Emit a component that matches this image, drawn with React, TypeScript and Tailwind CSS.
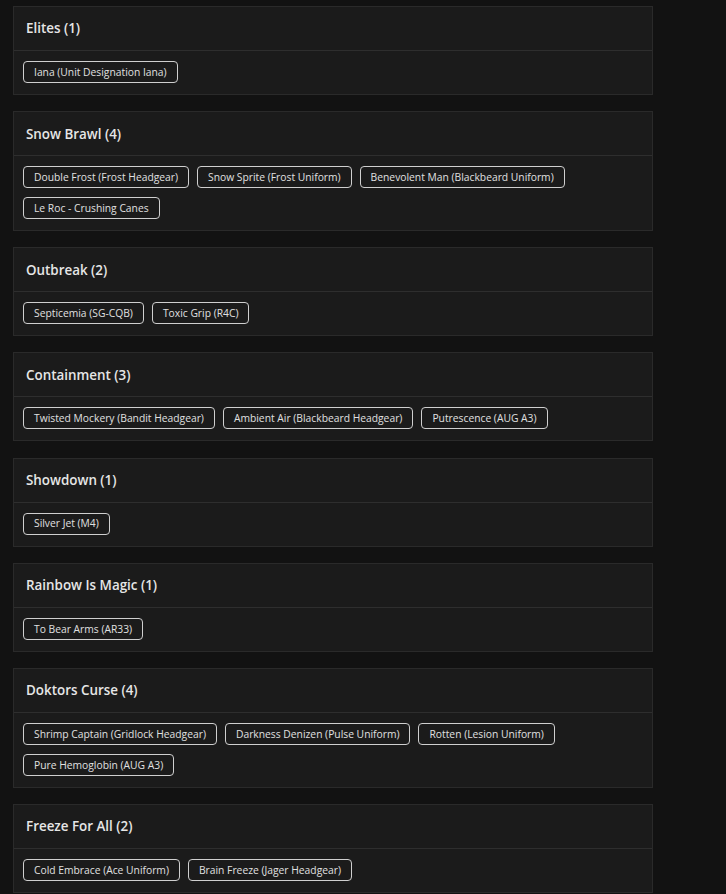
import React from "react";

const groups: { title: string; items: string[] }[] = [
  { title: "Elites (1)", items: ["Iana (Unit Designation Iana)"] },
  {
    title: "Snow Brawl (4)",
    items: [
      "Double Frost (Frost Headgear)",
      "Snow Sprite (Frost Uniform)",
      "Benevolent Man (Blackbeard Uniform)",
      "Le Roc - Crushing Canes",
    ],
  },
  { title: "Outbreak (2)", items: ["Septicemia (SG-CQB)", "Toxic Grip (R4C)"] },
  {
    title: "Containment (3)",
    items: [
      "Twisted Mockery (Bandit Headgear)",
      "Ambient Air (Blackbeard Headgear)",
      "Putrescence (AUG A3)",
    ],
  },
  { title: "Showdown (1)", items: ["Silver Jet (M4)"] },
  { title: "Rainbow Is Magic (1)", items: ["To Bear Arms (AR33)"] },
  {
    title: "Doktors Curse (4)",
    items: [
      "Shrimp Captain (Gridlock Headgear)",
      "Darkness Denizen (Pulse Uniform)",
      "Rotten (Lesion Uniform)",
      "Pure Hemoglobin (AUG A3)",
    ],
  },
  {
    title: "Freeze For All (2)",
    items: ["Cold Embrace (Ace Uniform)", "Brain Freeze (Jager Headgear)"],
  },
];

export default function App() {
  return (
    <div
      className="min-h-[894px] w-full bg-[#121212] pt-[6px] pl-[13px]"
      style={{ fontFamily: '"Open Sans", "Noto Sans", sans-serif' }}
    >
      <div className="flex w-[640px] flex-col gap-[16.15px]">
        {groups.map((g) => (
          <div key={g.title} className="border border-[#2a2a2a] bg-[#1b1b1b]">
            <div className="flex h-[44px] items-center border-b border-[#2e2e2e] px-[12px] text-[13.4px] font-semibold text-[#e6e6e6]">
              {g.title}
            </div>
            <div className="flex flex-wrap gap-x-[8px] gap-y-[9px] px-[9px] pt-[10px] pb-[11px]">
              {g.items.map((it) => (
                <div
                  key={it}
                  className="flex h-[22px] items-center rounded-[4px] border border-[#cfcfcf] px-[10px] text-[10.3px] leading-none text-[#e0e0e0]"
                >
                  {it}
                </div>
              ))}
            </div>
          </div>
        ))}
      </div>
    </div>
  );
}
